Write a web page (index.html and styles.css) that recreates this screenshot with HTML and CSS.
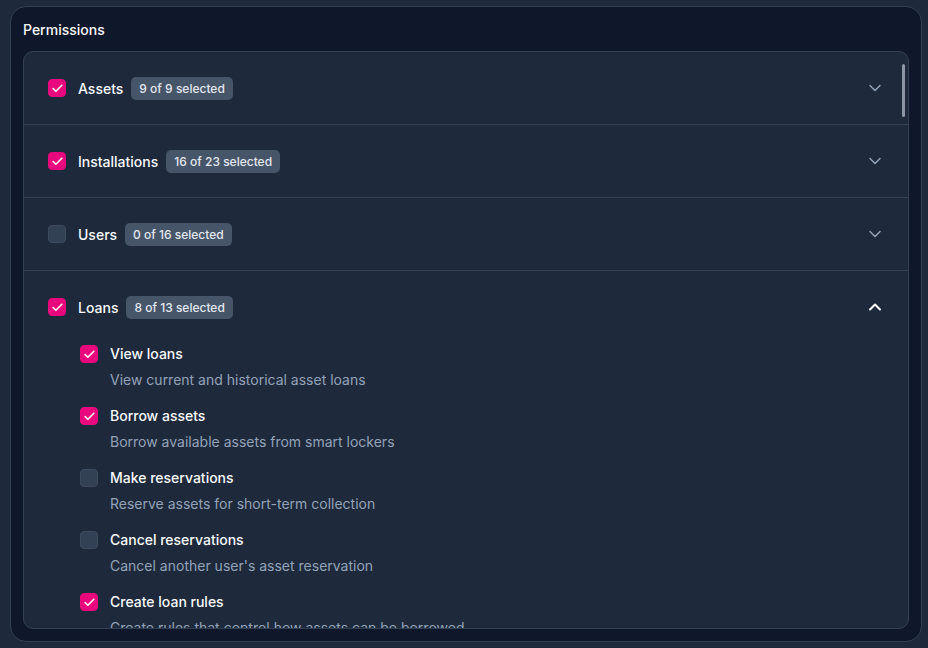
FILE: index.html
```html
<!DOCTYPE html>
<html lang="en">
<head>
  <meta charset="UTF-8" />
  <meta name="viewport" content="width=device-width, initial-scale=1.0" />
  <title>Permissions</title>
  <link rel="stylesheet" href="styles.css">
</head>
<body>
  <!-- Tarjeta de permisos -->
  <div class="card">
    <h2 class="card-title">Permissions</h2>

    <div class="panel">
      <!-- Barra de desplazamiento -->
      <div class="thumb"></div>

      <div class="group">
        <div class="group-head">
          <span class="check on"><svg viewBox="0 0 24 24"><path d="M20 6 9 17l-5-5"/></svg></span>
          <span class="group-name">Assets</span>
          <span class="badge">9 of 9 selected</span>
          <svg class="chevron" viewBox="0 0 24 24"><path d="m6 9 6 6 6-6"/></svg>
        </div>
      </div>

      <div class="group">
        <div class="group-head">
          <span class="check on"><svg viewBox="0 0 24 24"><path d="M20 6 9 17l-5-5"/></svg></span>
          <span class="group-name">Installations</span>
          <span class="badge">16 of 23 selected</span>
          <svg class="chevron" viewBox="0 0 24 24"><path d="m6 9 6 6 6-6"/></svg>
        </div>
      </div>

      <div class="group">
        <div class="group-head">
          <span class="check"></span>
          <span class="group-name">Users</span>
          <span class="badge">0 of 16 selected</span>
          <svg class="chevron" viewBox="0 0 24 24"><path d="m6 9 6 6 6-6"/></svg>
        </div>
      </div>

      <div class="group open">
        <div class="group-head">
          <span class="check on"><svg viewBox="0 0 24 24"><path d="M20 6 9 17l-5-5"/></svg></span>
          <span class="group-name">Loans</span>
          <span class="badge">8 of 13 selected</span>
          <svg class="chevron" viewBox="0 0 24 24"><path d="m18 15-6-6-6 6"/></svg>
        </div>

        <ul class="perm-list">
          <li class="perm">
            <span class="check on"><svg viewBox="0 0 24 24"><path d="M20 6 9 17l-5-5"/></svg></span>
            <div>
              <div class="perm-name">View loans</div>
              <div class="perm-desc">View current and historical asset loans</div>
            </div>
          </li>
          <li class="perm">
            <span class="check on"><svg viewBox="0 0 24 24"><path d="M20 6 9 17l-5-5"/></svg></span>
            <div>
              <div class="perm-name">Borrow assets</div>
              <div class="perm-desc">Borrow available assets from smart lockers</div>
            </div>
          </li>
          <li class="perm">
            <span class="check"></span>
            <div>
              <div class="perm-name">Make reservations</div>
              <div class="perm-desc">Reserve assets for short-term collection</div>
            </div>
          </li>
          <li class="perm">
            <span class="check"></span>
            <div>
              <div class="perm-name">Cancel reservations</div>
              <div class="perm-desc">Cancel another user's asset reservation</div>
            </div>
          </li>
          <li class="perm">
            <span class="check on"><svg viewBox="0 0 24 24"><path d="M20 6 9 17l-5-5"/></svg></span>
            <div>
              <div class="perm-name">Create loan rules</div>
              <div class="perm-desc">Create rules that control how assets can be borrowed</div>
            </div>
          </li>
        </ul>
      </div>
    </div>
  </div>
</body>
</html>
```

FILE: styles.css
```css
/* ===== General ===== */
* {
  box-sizing: border-box;
}
body {
  margin: 0;
  height: 100vh;
  background: #1e293b;
  font-family: Inter, "Noto Sans", sans-serif;
  color: #f1f5f9;
  overflow: hidden;
}
/* ===== Card ===== */
.card {
  margin: 6px 6px 6px 10px;
  height: calc(100vh - 12px);
  background: #0f172a;
  border: 1px solid #334155;
  border-radius: 16px;
  padding: 13px 12px 12px;
  display: flex;
  flex-direction: column;
}
.card-title {
  margin: 0 0 11px;
  font-size: 14px;
  line-height: 20px;
  font-weight: 500;
  color: #f8fafc;
}
/* ===== Panel with the groups ===== */
.panel {
  position: relative;
  flex: 1;
  min-height: 0;
  overflow: hidden;
  background: #1e293b;
  border: 1px solid #334155;
  border-radius: 10px;
}
.thumb {
  position: absolute;
  top: 12px;
  right: 3px;
  width: 3px;
  height: 53px;
  border-radius: 2px;
  background: #8d96a5;
}
.group {
  border-bottom: 1px solid #334155;
  padding: 24px 23px 24px 24px;
}
.group-head {
  display: flex;
  align-items: center;
  height: 24px;
}
.group-name {
  margin-left: 12px;
  font-size: 14px;
  font-weight: 500;
  color: #f8fafc;
}
.badge {
  margin-left: 8px;
  padding: 0 8px;
  height: 23px;
  line-height: 23px;
  border-radius: 5px;
  background: #475569;
  color: #e2e8f0;
  font-size: 12px;
  font-weight: 500;
}
.chevron {
  margin-left: auto;
  width: 20px;
  height: 20px;
  fill: none;
  stroke: #94a3b8;
  stroke-width: 1.8;
  stroke-linecap: round;
  stroke-linejoin: round;
}
.open .chevron {
  stroke: #f8fafc;
  stroke-width: 2.4;
}
/* ===== Checkbox ===== */
.check {
  flex: none;
  width: 18px;
  height: 18px;
  border-radius: 4px;
  background: #334155;
  border: 1px solid #3e4b5f;
  display: flex;
  align-items: center;
  justify-content: center;
}
.check.on {
  background: #e8077c;
  border-color: #e8077c;
}
.check svg {
  width: 13px;
  height: 13px;
  fill: none;
  stroke: #fff;
  stroke-width: 3;
  stroke-linecap: round;
  stroke-linejoin: round;
}
/* ===== Permissions inside an open group ===== */
.perm-list {
  list-style: none;
  margin: 25px 0 0;
  padding: 0 0 0 32px;
  display: flex;
  flex-direction: column;
  gap: 16px;
}
.perm {
  display: flex;
  gap: 12px;
}
.perm .check {
  margin-top: 1px;
}
.perm-name {
  font-size: 14px;
  line-height: 20px;
  font-weight: 500;
  color: #f8fafc;
}
.perm-desc {
  margin-top: 6px;
  font-size: 14px;
  line-height: 20px;
  color: #94a3b8;
}
```
